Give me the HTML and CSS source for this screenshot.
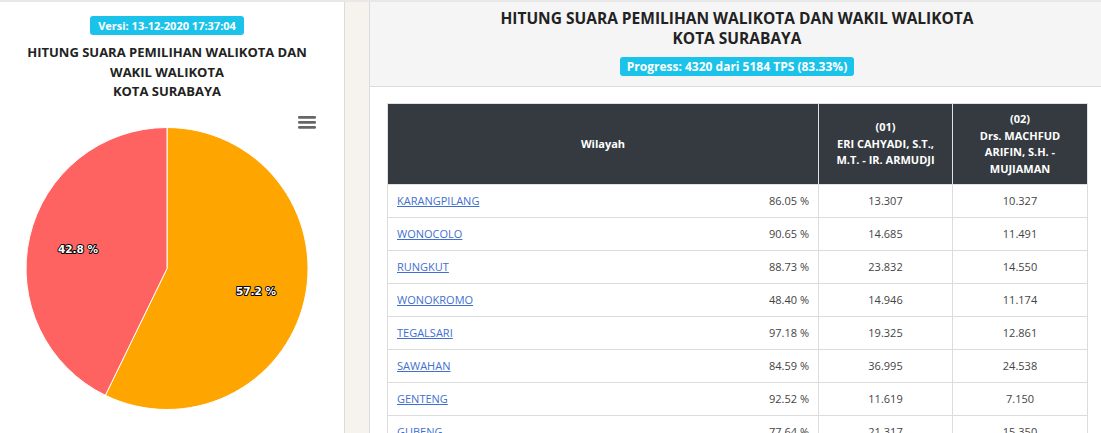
FILE: index.html
```html
<!DOCTYPE html>
<html>
<head>
<meta charset="utf-8">
<link rel="stylesheet" href="styles.css">
</head>
<body>
<div class="page">
  <div class="left-card">
    <div class="left-inner">
      <span class="badge badge-version">Versi: 13-12-2020 17:37:04</span>
      <h2 class="left-title">HITUNG SUARA PEMILIHAN WALIKOTA DAN<br>WAKIL WALIKOTA<br>KOTA SURABAYA</h2>
      <div class="chart">
        <svg width="334" height="330" viewBox="0 0 334 330" xmlns="http://www.w3.org/2000/svg">
          <g class="menu">
            <rect x="298" y="11" width="18" height="2.7" rx="1.3" fill="#666"/>
            <rect x="298" y="16" width="18" height="2.7" rx="1.3" fill="#666"/>
            <rect x="298" y="21" width="18" height="2.7" rx="1.3" fill="#666"/>
          </g>
          <path d="M167 163.5 L167 22.5 A141 141 0 1 1 105.37 290.3 Z" fill="#ffa500" stroke="#ffffff" stroke-width="1" stroke-linejoin="round"/>
          <path d="M167 163.5 L105.37 290.3 A141 141 0 0 1 167 22.5 Z" fill="#ff6361" stroke="#ffffff" stroke-width="1" stroke-linejoin="round"/>
          <text class="plabel" x="78" y="148" text-anchor="middle">42.8 %</text>
          <text class="plabel" x="256" y="190" text-anchor="middle">57.2 %</text>
        </svg>
      </div>
    </div>
  </div>
  <div class="right-card">
    <div class="right-head">
      <h2 class="right-title">HITUNG SUARA PEMILIHAN WALIKOTA DAN WAKIL WALIKOTA<br>KOTA SURABAYA</h2>
      <span class="badge badge-progress">Progress: 4320 dari 5184 TPS (83.33%)</span>
    </div>
    <div class="right-body">
      <table class="vote-table">
        <colgroup>
          <col class="c-wil"><col class="c-01"><col class="c-02">
        </colgroup>
        <thead>
          <tr>
            <th>Wilayah</th>
            <th>(01)<br>ERI CAHYADI, S.T.,<br>M.T. - IR. ARMUDJI</th>
            <th>(02)<br>Drs. MACHFUD<br>ARIFIN, S.H. -<br>MUJIAMAN</th>
          </tr>
        </thead>
        <tbody>
          <tr><td><div class="wil"><a href="#">KARANGPILANG</a><span>86.05 %</span></div></td><td>13.307</td><td>10.327</td></tr>
          <tr><td><div class="wil"><a href="#">WONOCOLO</a><span>90.65 %</span></div></td><td>14.685</td><td>11.491</td></tr>
          <tr><td><div class="wil"><a href="#">RUNGKUT</a><span>88.73 %</span></div></td><td>23.832</td><td>14.550</td></tr>
          <tr><td><div class="wil"><a href="#">WONOKROMO</a><span>48.40 %</span></div></td><td>14.946</td><td>11.174</td></tr>
          <tr><td><div class="wil"><a href="#">TEGALSARI</a><span>97.18 %</span></div></td><td>19.325</td><td>12.861</td></tr>
          <tr><td><div class="wil"><a href="#">SAWAHAN</a><span>84.59 %</span></div></td><td>36.995</td><td>24.538</td></tr>
          <tr><td><div class="wil"><a href="#">GENTENG</a><span>92.52 %</span></div></td><td>11.619</td><td>7.150</td></tr>
          <tr><td><div class="wil"><a href="#">GUBENG</a><span>77.64 %</span></div></td><td>21.317</td><td>15.350</td></tr>
        </tbody>
      </table>
    </div>
  </div>
</div>
</body>
</html>
```
FILE: styles.css
```css
html, body {
  margin: 0;
  padding: 0;
  overflow: hidden;
}
body {
  background: #f6f2ee;
  font-family: "Open Sans", "Liberation Sans", sans-serif;
  color: #333;
}
.page {
  display: flex;
  align-items: flex-start;
  width: 1104px;
  border-top: 2px solid #e8e8e8;
  height: 500px;
}
.left-card {
  width: 334px;
  padding-right: 10px;
  background: #fff;
  border-right: 1px solid #dcdcdc;
  height: 100%;
}
.left-inner {
  display: flex;
  flex-direction: column;
  align-items: center;
  padding-top: 14px;
}
.badge {
  display: inline-block;
  background: #1bc3ea;
  color: #fff;
  font-weight: 700;
  border-radius: 3px;
}
.badge-version {
  font-size: 11px;
  line-height: 15px;
  padding: 2px 8px 2px 8px;
}
.left-title {
  margin: 8px 0 0;
  font-size: 13px;
  line-height: 19.5px;
  font-weight: 700;
  text-align: center;
  color: #222;
}
.chart {
  margin-top: 3px;
  width: 334px;
}
.chart svg {
  display: block;
}
.plabel {
  font-family: "DejaVu Sans", Verdana, sans-serif;
  font-size: 10.5px;
  font-weight: 700;
  fill: #fff;
  stroke: #000;
  stroke-width: 2px;
  paint-order: stroke;
  stroke-linejoin: round;
}
.right-card {
  margin-left: 24px;
  width: 734px;
  background: #fff;
  border-left: 1px solid #dcdcdc;
  height: 100%;
}
.right-head {
  background: #f5f5f5;
  border-bottom: 1px solid #dcdcdc;
  display: flex;
  flex-direction: column;
  align-items: center;
  padding: 6px 0 10px;
}
.right-title {
  margin: 0;
  font-size: 15.5px;
  line-height: 20px;
  font-weight: 700;
  text-align: center;
  color: #222;
}
.badge-progress {
  margin-top: 9px;
  font-size: 12px;
  line-height: 15px;
  padding: 2px 7px;
}
.right-body {
  padding: 16px 17px 0;
}
.vote-table {
  width: 700px;
  border-collapse: collapse;
  table-layout: fixed;
  font-size: 11px;
}
.c-wil { width: 431px; }
.c-01 { width: 134px; }
.c-02 { width: 135px; }
.vote-table th {
  background: #343a40;
  color: #fff;
  font-weight: 700;
  line-height: 16.5px;
  padding: 7px 6px;
  text-align: center;
  vertical-align: middle;
  border: 1px solid #dee2e6;
}
.vote-table td {
  border: 1px solid #dcdcdc;
  padding: 8px 9px;
  line-height: 16px;
  text-align: center;
  color: #444;
}
.wil {
  display: flex;
  justify-content: space-between;
}
.wil a {
  color: #3f6fcf;
  text-decoration: underline;
}
```
